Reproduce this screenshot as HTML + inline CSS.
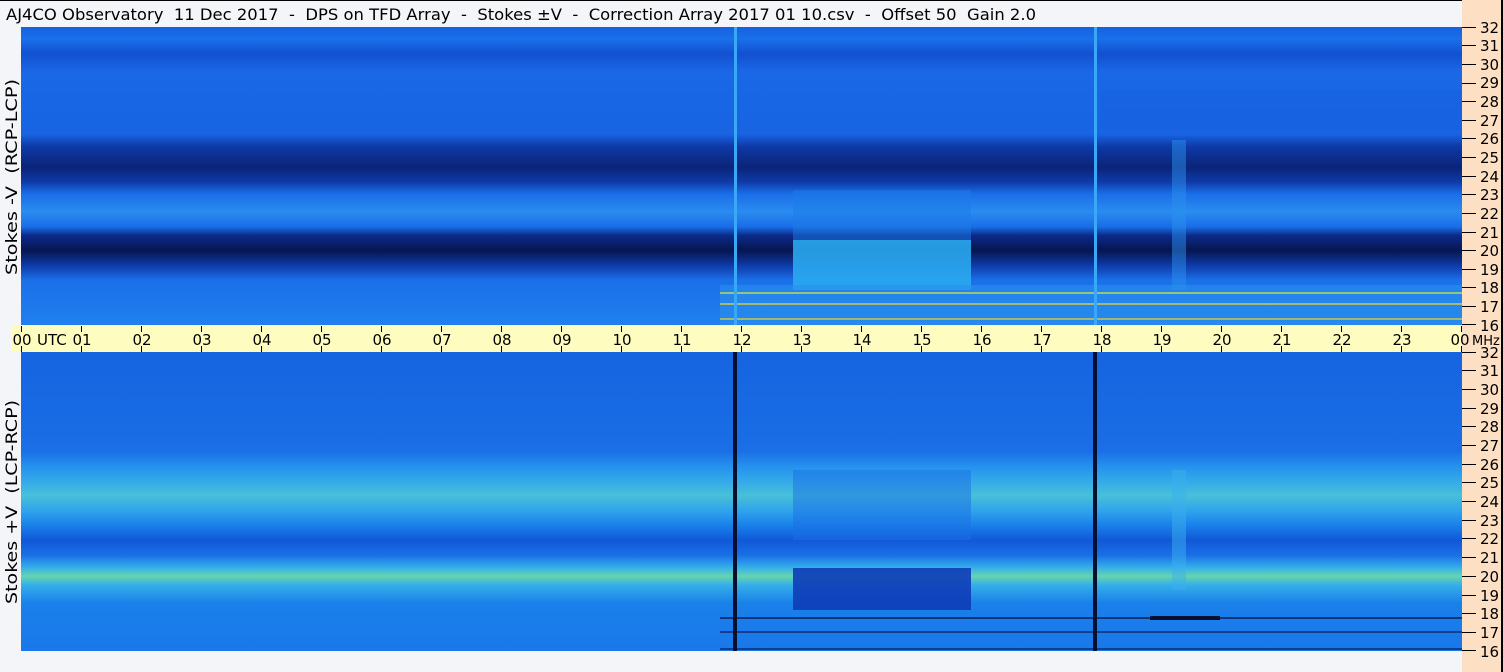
<!DOCTYPE html>
<html><head><style>
html,body{margin:0;padding:0;background:#f4f5f8;}
svg{display:block;}
text{font-family:"DejaVu Sans","Liberation Sans",sans-serif;fill:#000;white-space:pre;}
</style></head><body>
<svg width="1503" height="672" viewBox="0 0 1503 672" xmlns="http://www.w3.org/2000/svg" xml:space="preserve">
<defs>
<linearGradient id="gt" x1="0" y1="0" x2="0" y2="1">
<stop offset="0" stop-color="#1560e0"/>
<stop offset="0.04" stop-color="#1a70ea"/>
<stop offset="0.09" stop-color="#1250d0"/>
<stop offset="0.15" stop-color="#1a68e6"/>
<stop offset="0.36" stop-color="#1864e2"/>
<stop offset="0.40" stop-color="#0e3aa8"/>
<stop offset="0.47" stop-color="#0a2478"/>
<stop offset="0.52" stop-color="#0e3aa8"/>
<stop offset="0.56" stop-color="#1a6ee8"/>
<stop offset="0.62" stop-color="#2a8cf0"/>
<stop offset="0.67" stop-color="#1a6ee8"/>
<stop offset="0.70" stop-color="#0c2a88"/>
<stop offset="0.75" stop-color="#061650"/>
<stop offset="0.80" stop-color="#0e3aa8"/>
<stop offset="0.85" stop-color="#1a70e8"/>
<stop offset="1" stop-color="#2080ee"/>
</linearGradient>
<linearGradient id="gb" x1="0" y1="0" x2="0" y2="1">
<stop offset="0" stop-color="#1664e0"/>
<stop offset="0.33" stop-color="#1a6ee6"/>
<stop offset="0.38" stop-color="#2490ee"/>
<stop offset="0.44" stop-color="#36aee8"/>
<stop offset="0.48" stop-color="#48c0d8"/>
<stop offset="0.53" stop-color="#30a4ec"/>
<stop offset="0.58" stop-color="#1a80ea"/>
<stop offset="0.63" stop-color="#1058d8"/>
<stop offset="0.68" stop-color="#1a70e6"/>
<stop offset="0.72" stop-color="#34aeea"/>
<stop offset="0.75" stop-color="#66d4b0"/>
<stop offset="0.78" stop-color="#34aeea"/>
<stop offset="0.84" stop-color="#1a80ea"/>
<stop offset="1" stop-color="#1a78ea"/>
</linearGradient>
</defs>
<rect x="0" y="0" width="1503" height="672" fill="#f4f5f8"/>
<rect x="0" y="0" width="1503" height="1" fill="#000"/>
<text x="6" y="20" font-size="16" textLength="1030" lengthAdjust="spacingAndGlyphs">AJ4CO Observatory  11 Dec 2017  -  DPS on TFD Array  -  Stokes ±V  -  Correction Array 2017 01 10.csv  -  Offset 50  Gain 2.0</text>
<!-- top plot -->
<rect x="21" y="27" width="1441" height="298" fill="url(#gt)"/>
<rect x="793" y="240" width="178" height="50" fill="#2aa8f0" opacity="0.9"/>
<rect x="793" y="190" width="178" height="50" fill="#1c7ce8" opacity="0.5"/>
<rect x="1100" y="90" width="362" height="40" fill="#1660e0" opacity="0.5"/>
<rect x="720" y="285" width="742" height="40" fill="#2a90ec" opacity="0.6"/>
<rect x="720" y="292" width="742" height="2" fill="#c8e050" opacity="0.7"/>
<rect x="720" y="303" width="742" height="2" fill="#e0d040" opacity="0.7"/>
<rect x="720" y="318" width="742" height="2" fill="#e0c840" opacity="0.7"/>
<rect x="1172" y="140" width="14" height="150" fill="#2a90ee" opacity="0.5"/>
<rect x="734" y="27" width="3" height="298" fill="#3aa8f8"/>
<rect x="1094" y="27" width="3" height="298" fill="#3aa8f8"/>
<!-- bottom plot -->
<rect x="21" y="352" width="1441" height="299" fill="url(#gb)"/>
<rect x="793" y="568" width="178" height="42" fill="#0e3cb8" opacity="0.9"/>
<rect x="793" y="470" width="178" height="70" fill="#1a70e4" opacity="0.5"/>
<rect x="1172" y="470" width="14" height="120" fill="#3ab0ee" opacity="0.5"/>
<rect x="720" y="617" width="742" height="2" fill="#081850" opacity="0.7"/>
<rect x="720" y="631" width="742" height="2" fill="#081850" opacity="0.6"/>
<rect x="720" y="648" width="742" height="2" fill="#081850" opacity="0.6"/>
<rect x="1150" y="616" width="70" height="4" fill="#050f30"/>
<rect x="733" y="352" width="4" height="299" fill="#050f30"/>
<rect x="1093" y="352" width="4" height="299" fill="#050f30"/>
<!-- right scale -->
<rect x="1462" y="0" width="39" height="672" fill="#fde0c4"/>
<rect x="1501" y="0" width="2" height="672" fill="#000"/>
<!-- axis band -->
<rect x="11" y="326" width="1451" height="26" fill="#fffcc0"/>
<g stroke="#000" stroke-width="1">
<path d="M21.5 326v6M81.5 326v6M141.5 326v6M201.5 326v6M261.5 326v6M321.5 326v6M381.5 326v6M441.5 326v6M501.5 326v6M561.5 326v6M621.5 326v6M681.5 326v6M741.5 326v6M801.5 326v6M861.5 326v6M921.5 326v6M981.5 326v6M1041.5 326v6M1101.5 326v6M1161.5 326v6M1221.5 326v6M1281.5 326v6M1341.5 326v6M1401.5 326v6M1461.5 326v6"/>
<path d="M21.5 346v6M81.5 346v6M141.5 346v6M201.5 346v6M261.5 346v6M321.5 346v6M381.5 346v6M441.5 346v6M501.5 346v6M561.5 346v6M621.5 346v6M681.5 346v6M741.5 346v6M801.5 346v6M861.5 346v6M921.5 346v6M981.5 346v6M1041.5 346v6M1101.5 346v6M1161.5 346v6M1221.5 346v6M1281.5 346v6M1341.5 346v6M1401.5 346v6M1461.5 346v6"/>
</g>
<g font-size="15" text-anchor="middle">
<text x="22" y="345">00</text><text x="82" y="345">01</text><text x="142" y="345">02</text><text x="202" y="345">03</text><text x="262" y="345">04</text><text x="322" y="345">05</text><text x="382" y="345">06</text><text x="442" y="345">07</text><text x="502" y="345">08</text><text x="562" y="345">09</text><text x="622" y="345">10</text><text x="682" y="345">11</text><text x="742" y="345">12</text><text x="802" y="345">13</text><text x="862" y="345">14</text><text x="922" y="345">15</text><text x="982" y="345">16</text><text x="1042" y="345">17</text><text x="1102" y="345">18</text><text x="1162" y="345">19</text><text x="1222" y="345">20</text><text x="1282" y="345">21</text><text x="1342" y="345">22</text><text x="1402" y="345">23</text><text x="1460" y="345">00</text>
</g>
<text x="37" y="345" font-size="15">UTC</text>
<text x="1472" y="345" font-size="13">MHz</text>
<g stroke="#000" stroke-width="1">
<path d="M1462 27.5h14M1462 45.5h14M1462 64.5h14M1462 83.5h14M1462 101.5h14M1462 120.5h14M1462 138.5h14M1462 157.5h14M1462 176.5h14M1462 194.5h14M1462 213.5h14M1462 232.5h14M1462 250.5h14M1462 269.5h14M1462 287.5h14M1462 306.5h14M1462 324.5h14"/>
<path d="M1462 352.5h14M1462 370.5h14M1462 389.5h14M1462 408.5h14M1462 426.5h14M1462 445.5h14M1462 464.5h14M1462 482.5h14M1462 501.5h14M1462 520.5h14M1462 538.5h14M1462 557.5h14M1462 576.5h14M1462 595.5h14M1462 613.5h14M1462 632.5h14M1462 650.5h14"/>
</g>
<g font-size="15">
<text x="1480" y="33">32</text><text x="1480" y="51">31</text><text x="1480" y="70">30</text><text x="1480" y="88">29</text><text x="1480" y="107">28</text><text x="1480" y="126">27</text><text x="1480" y="144">26</text><text x="1480" y="163">25</text><text x="1480" y="182">24</text><text x="1480" y="200">23</text><text x="1480" y="219">22</text><text x="1480" y="238">21</text><text x="1480" y="256">20</text><text x="1480" y="275">19</text><text x="1480" y="293">18</text><text x="1480" y="312">17</text><text x="1480" y="331">16</text>
<text x="1480" y="358">32</text><text x="1480" y="376">31</text><text x="1480" y="395">30</text><text x="1480" y="414">29</text><text x="1480" y="432">28</text><text x="1480" y="451">27</text><text x="1480" y="470">26</text><text x="1480" y="488">25</text><text x="1480" y="507">24</text><text x="1480" y="526">23</text><text x="1480" y="544">22</text><text x="1480" y="563">21</text><text x="1480" y="582">20</text><text x="1480" y="601">19</text><text x="1480" y="619">18</text><text x="1480" y="638">17</text><text x="1480" y="657">16</text>
</g>
<text transform="translate(17,177) rotate(-90)" font-size="16" text-anchor="middle" textLength="196" lengthAdjust="spacingAndGlyphs">Stokes -V  (RCP-LCP)</text>
<text transform="translate(17,502) rotate(-90)" font-size="16" text-anchor="middle" textLength="204" lengthAdjust="spacingAndGlyphs">Stokes +V  (LCP-RCP)</text>
</svg>
</body></html>
